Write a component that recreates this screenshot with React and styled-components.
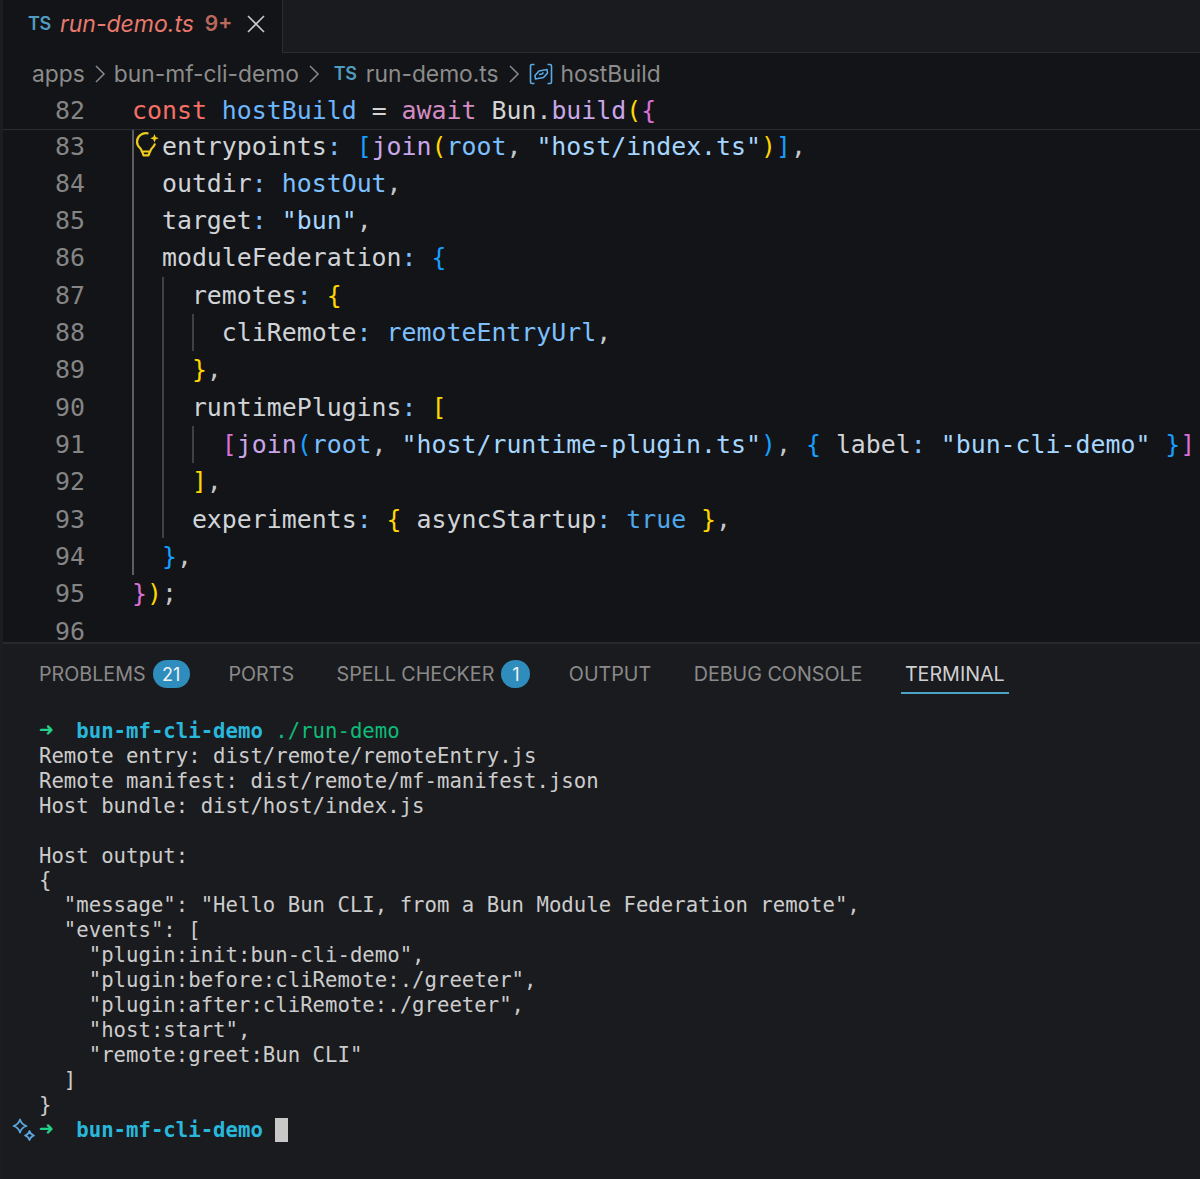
import React from 'react';
import styled, { createGlobalStyle } from 'styled-components';

const COLORS = {
  kw: '#f47067',
  aw: '#d48cc4',
  vr: '#6cb6ff',
  tx: '#d4d4d4',
  pr: '#d0d4d8',
  pn: '#c4c8cc',
  fn: '#c9a6ea',
  st: '#a5d6ff',
  id: '#7cc0ff',
  gold: '#ffd700',
  pink: '#da70d6',
  blue: '#179fff',
  bool: '#4fa8ea',
};

const CODE = [
  { n: 83, g: 1, t: [['entrypoints', 'pr'], [': ', 'id'], ['[', 'blue'], ['join', 'fn'], ['(', 'gold'], ['root', 'id'], [', ', 'pn'], ['"host/index.ts"', 'st'], [')', 'gold'], [']', 'blue'], [',', 'pn']] },
  { n: 84, g: 1, t: [['outdir', 'pr'], [': ', 'id'], ['hostOut', 'id'], [',', 'pn']] },
  { n: 85, g: 1, t: [['target', 'pr'], [': ', 'id'], ['"bun"', 'st'], [',', 'pn']] },
  { n: 86, g: 1, t: [['moduleFederation', 'pr'], [': ', 'id'], ['{', 'blue']] },
  { n: 87, g: 2, t: [['remotes', 'pr'], [': ', 'id'], ['{', 'gold']] },
  { n: 88, g: 3, t: [['cliRemote', 'pr'], [': ', 'id'], ['remoteEntryUrl', 'id'], [',', 'pn']] },
  { n: 89, g: 2, t: [['}', 'gold'], [',', 'pn']] },
  { n: 90, g: 2, t: [['runtimePlugins', 'pr'], [': ', 'id'], ['[', 'gold']] },
  { n: 91, g: 3, t: [['[', 'pink'], ['join', 'fn'], ['(', 'blue'], ['root', 'id'], [', ', 'pn'], ['"host/runtime-plugin.ts"', 'st'], [')', 'blue'], [', ', 'pn'], ['{ ', 'blue'], ['label', 'pr'], [': ', 'id'], ['"bun-cli-demo"', 'st'], [' }', 'blue'], [']', 'pink'], [',', 'pn']] },
  { n: 92, g: 2, t: [[']', 'gold'], [',', 'pn']] },
  { n: 93, g: 2, t: [['experiments', 'pr'], [': ', 'id'], ['{ ', 'gold'], ['asyncStartup', 'pr'], [': ', 'id'], ['true', 'bool'], [' }', 'gold'], [',', 'pn']] },
  { n: 94, g: 1, t: [['}', 'blue'], [',', 'pn']] },
  { n: 95, g: 0, t: [['}', 'pink'], [')', 'gold'], [';', 'pn']] },
  { n: 96, g: 0, t: [] },
];

const TABS = [
  { label: 'PROBLEMS', badge: '21' },
  { label: 'PORTS' },
  { label: 'SPELL CHECKER', badge: '1' },
  { label: 'OUTPUT' },
  { label: 'DEBUG CONSOLE' },
  { label: 'TERMINAL', active: true },
];

const TERMINAL = `Remote entry: dist/remote/remoteEntry.js
Remote manifest: dist/remote/mf-manifest.json
Host bundle: dist/host/index.js

Host output:
{
  "message": "Hello Bun CLI, from a Bun Module Federation remote",
  "events": [
    "plugin:init:bun-cli-demo",
    "plugin:before:cliRemote:./greeter",
    "plugin:after:cliRemote:./greeter",
    "host:start",
    "remote:greet:Bun CLI"
  ]
}`;

const Chevron = () => (
  <ChevronSvg viewBox="0 0 12 20" fill="none" stroke="#8a8a8a" strokeWidth="1.5">
    <path d="M2 2l8 8-8 8" />
  </ChevronSvg>
);

const Tokens = ({ list }) =>
  list.map(([text, c], i) => (
    <Token key={i} $c={COLORS[c]}>
      {text}
    </Token>
  ));

const App = () => {
  return (
    <Wrapper>
      <GlobalStyle />
      <TabBar>
        <ActiveTab>
          <TsIcon>TS</TsIcon>
          <TabTitle>run-demo.ts</TabTitle>
          <TabCount>9+</TabCount>
          <svg width="18" height="18" viewBox="0 0 18 18" stroke="#c8c8c8" strokeWidth="1.6">
            <path d="M1 1l16 16M17 1L1 17" />
          </svg>
        </ActiveTab>
        <TabRest />
      </TabBar>
      <Breadcrumbs>
        <span>apps</span>
        <Chevron />
        <span>bun-mf-cli-demo</span>
        <Chevron />
        <CrumbTs>TS</CrumbTs>
        <span>run-demo.ts</span>
        <Chevron />
        <CrumbIcon width="24" height="24" viewBox="0 0 24 24" fill="none" stroke="#5aaae6" strokeWidth="1.6">
          <path d="M5.500 2.500H3a1.500 1.500 0 0 0-1.500 1.500v16A1.500 1.500 0 0 0 3 21.500h2.500" />
          <path d="M18.500 2.500H21a1.500 1.500 0 0 1 1.500 1.500v16a1.500 1.500 0 0 1-1.500 1.500h-2.500" />
          <path d="M6 13.500L10 9l8-1.500 .5 3.500-4 4.500-8 1.500z" strokeLinejoin="round" />
          <path d="M10 12.500l3-.5 1.500-1.500" />
        </CrumbIcon>
        <span>hostBuild</span>
      </Breadcrumbs>
      <StickyLine>
        <LineNo>82</LineNo>
        <Code>
          <Tokens
            list={[
              ['const ', 'kw'],
              ['hostBuild', 'vr'],
              [' = ', 'tx'],
              ['await ', 'aw'],
              ['Bun', 'tx'],
              ['.', 'pn'],
              ['build', 'fn'],
              ['(', 'gold'],
              ['{', 'pink'],
            ]}
          />
        </Code>
      </StickyLine>
      <Editor>
        <CodeList>
          {CODE.map((line) => (
            <Line key={line.n}>
              <LineNo>{line.n}</LineNo>
              <Code>
                {Array.from({ length: line.g }, (_, i) => (
                  <Guide key={i} $first={i === 0} />
                ))}
                {line.n === 83 && (
                  <Bulb width="24" height="26" viewBox="0 0 24 26" fill="none" stroke="#efcb1e" strokeWidth="2.2">
                    <path d="M13.500 2.500C7 1 2 5.500 2 10.500c0 3 1.400 5 3 6.500 1.200 1.200 1.600 2.500 1.800 3.500h8.400c.3-1.300.9-2.500 2-3.500 1.300-1.200 2.400-2.700 2.800-4.500" strokeLinejoin="round" />
                    <path d="M7.200 20.500l1.300 3.800h5l1.400-3.800" strokeLinejoin="round" />
                    <path d="M19.500 3l1.200 3 3 1.200-3 1.200-1.200 3-1.200-3-3-1.200 3-1.200z" fill="#efcb1e" stroke="none" />
                  </Bulb>
                )}
                <Tokens list={line.t} />
              </Code>
            </Line>
          ))}
        </CodeList>
      </Editor>
      <Panel>
        <PanelTabs>
          {TABS.map((tab) => (
            <PanelTab key={tab.label} $active={tab.active} $badge={!!tab.badge}>
              {tab.label}
              {tab.badge && <Badge>{tab.badge}</Badge>}
            </PanelTab>
          ))}
        </PanelTabs>
        <Terminal>
          <PromptLine>
            <ArrowCell>
              <Arrow>➜</Arrow>
            </ArrowCell>
            <Dir>bun-mf-cli-demo</Dir> <Command>./run-demo</Command>
          </PromptLine>
          <Output>{TERMINAL}</Output>
          <PromptLine>
            <Sparkle width="24" height="24" viewBox="0 0 24 24" fill="none" stroke="#5aa5e0" strokeWidth="1.8" strokeLinejoin="round">
              <path d="M8 1.500c1 3.500 3 5.500 6.500 6.500-3.500 1-5.500 3-6.500 6.500C7 11 5 9 1.500 8 5 7 7 5 8 1.500z" />
              <path d="M17.500 13c.7 2.400 2 3.800 4.500 4.500-2.500.7-3.800 2.100-4.500 4.500-.7-2.400-2-3.800-4.500-4.500 2.500-.7 3.800-2.100 4.500-4.500z" />
            </Sparkle>
            <ArrowCell>
              <Arrow>➜</Arrow>
            </ArrowCell>
            <Dir>bun-mf-cli-demo</Dir> <Cursor />
          </PromptLine>
        </Terminal>
      </Panel>
    </Wrapper>
  );
};

export default App;

const GlobalStyle = createGlobalStyle`
  html, body {
    margin: 0;
    padding: 0;
    background-color: #1a1b1e;
  }
`;
const Wrapper = styled.div`
  width: 1200px;
  height: 1179px;
  overflow: hidden;
  box-sizing: border-box;
  border-left: 3px solid #1c1d20;
  display: flex;
  flex-direction: column;
  font-family: Inter, "Liberation Sans", sans-serif;
  background-color: #131417;
`;
const TabBar = styled.div`
  display: flex;
  height: 53px;
  flex: none;
`;
const ActiveTab = styled.div`
  width: 280px;
  box-sizing: border-box;
  padding-left: 25px;
  display: flex;
  align-items: center;
  border-right: 1px solid #2c2d30;
  padding-bottom: 6px;
`;
const TabRest = styled.div`
  flex: 1;
  background-color: #1a1b1e;
  border-bottom: 1px solid #2c2d30;
`;
const TsIcon = styled.span`
  font-size: 18px;
  font-weight: 600;
  color: #4f9cc0;
  width: 21px;
  letter-spacing: -0.5px;
`;
const CrumbTs = styled(TsIcon)`
  margin-left: 6px;
  margin-right: 3px;
`;
const TabTitle = styled.span`
  font-size: 23px;
  font-style: italic;
  color: #e8796c;
  margin-left: 11px;
`;
const TabCount = styled.span`
  font-size: 21px;
  font-weight: 600;
  color: #b9695c;
  margin-left: 11px;
  margin-right: 15px;
`;
const Breadcrumbs = styled.div`
  height: 39px;
  flex: none;
  box-sizing: border-box;
  padding: 2px 0 0 29px;
  display: flex;
  align-items: center;
  gap: 8px;
  font-size: 22.8px;
  color: #8c8c8c;
`;
const ChevronSvg = styled.svg`
  width: 12px;
  height: 20px;
  margin-left: 1px;
`;
const CrumbIcon = styled.svg`
  margin-left: 1px;
`;
const Line = styled.div`
  display: flex;
  height: 37.33px;
  line-height: 37.33px;
  white-space: pre;
  font-family: "DejaVu Sans Mono", monospace;
  font-size: 24.88px;
`;
const StickyLine = styled(Line)`
  flex: none;
  height: 38px;
  box-sizing: border-box;
  border-bottom: 1px solid #2c2d30;
  background-color: #131417;
  position: relative;
  z-index: 1;
`;
const LineNo = styled.span`
  width: 82px;
  margin-right: 47px;
  flex: none;
  text-align: right;
  color: #858585;
`;
const Code = styled.div`
  display: flex;
  position: relative;
  padding-left: 1px;
  margin-left: -1px;
`;
const Token = styled.span`
  color: ${(p) => p.$c};
`;
const Guide = styled.span`
  width: 2ch;
  flex: none;
  box-sizing: border-box;
  border-left: 2px solid ${(p) => (p.$first ? '#5c5d60' : '#404144')};
`;
const Bulb = styled.svg`
  position: absolute;
  left: 4px;
  top: 3px;
`;
const Editor = styled.div`
  height: 512px;
  flex: none;
  overflow: hidden;
`;
const CodeList = styled.div`
  margin-top: -2.5px;
`;
const Panel = styled.div`
  flex: 1;
  background-color: #1a1b1e;
  border-top: 2px solid #28292c;
`;
const PanelTabs = styled.div`
  display: flex;
  padding-left: 32px;
  gap: 34.5px;
  height: 50px;
`;
const PanelTab = styled.div`
  box-sizing: border-box;
  height: 50px;
  padding: 12px ${(p) => (p.$badge ? 0 : '4px')} 0 4px;
  display: flex;
  align-items: center;
  gap: 7px;
  font-size: 19.7px;
  color: ${(p) => (p.$active ? '#d0d0d0' : '#8a8a8a')};
  border-bottom: 2px solid ${(p) => (p.$active ? '#4ea3c8' : 'transparent')};
`;
const Badge = styled.span`
  min-width: 29px;
  height: 28px;
  padding: 0 ${(p) => (p.children.length > 1 ? '9.500px' : 0)};
  box-sizing: border-box;
  border-radius: 14px;
  background-color: #2f8dbd;
  color: #f2f2f2;
  font-size: 18px;
  display: flex;
  align-items: center;
  justify-content: center;
`;
const Terminal = styled.div`
  padding: 25px 0 0 36px;
  font-family: "DejaVu Sans Mono", monospace;
  font-size: 20.67px;
  line-height: 24.9px;
  color: #cccccc;
`;
const PromptLine = styled.div`
  position: relative;
  white-space: pre;
`;
const Output = styled.pre`
  margin: 0;
  font: inherit;
`;
const ArrowCell = styled.span`
  display: inline-block;
  width: 3ch;
`;
const Arrow = styled.span`
  color: #23d18b;
  font-weight: 700;
  font-size: 24px;
  line-height: 0;
`;
const Dir = styled.span`
  color: #29b8db;
  font-weight: 700;
`;
const Command = styled.span`
  color: #0dbc79;
`;
const Cursor = styled.span`
  display: inline-block;
  width: 13px;
  height: 24px;
  vertical-align: -5px;
  background-color: #c8c8c8;
`;
const Sparkle = styled.svg`
  position: absolute;
  left: -27px;
  top: 0;
`;
